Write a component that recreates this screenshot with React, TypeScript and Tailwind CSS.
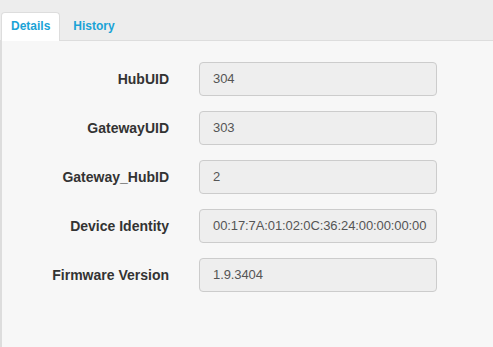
import React from "react";

const rows: [string, string][] = [
  ["HubUID", "304"],
  ["GatewayUID", "303"],
  ["Gateway_HubID", "2"],
  ["Device Identity", "00:17:7A:01:02:0C:36:24:00:00:00:00"],
  ["Firmware Version", "1.9.3404"],
];

export default function App() {
  return (
    <div
      className="w-[493px] h-[347px] flex flex-col bg-[#f7f7f7] overflow-hidden"
      style={{ fontFamily: '"Liberation Sans", Arial, sans-serif' }}
    >
      <div className="h-[41px] shrink-0 bg-[#ededed] border-b border-[#dddddd] flex items-end pl-[1px]">
        <div className="h-[29px] -mb-px bg-white border border-b-0 border-[#dddddd] rounded-t-[4px] px-[9px] pb-[2px] flex items-center text-[12px] font-bold text-[#1aa3d6]">
          Details
        </div>
        <div className="h-[29px] -mb-px px-[13px] pb-[2px] flex items-center text-[12px] font-bold text-[#1aa3d6]">
          History
        </div>
      </div>
      <div className="flex-1 flex">
        <div className="w-[2px] bg-[#dddddd]" />
        <div className="flex-1 pt-[21px] flex flex-col gap-[15px]">
          {rows.map(([label, value]) => (
            <div key={label} className="flex items-center">
              <div className="w-[167px] text-right text-[14px] font-bold text-[#333333]">
                {label}
              </div>
              <div className="ml-[30px] w-[238px] h-[34px] bg-[#eeeeee] border border-[#cccccc] rounded-[4px] flex items-center px-[13px] text-[13px] text-[#555555] whitespace-nowrap tracking-[-0.1px]">
                {value}
              </div>
            </div>
          ))}
        </div>
      </div>
    </div>
  );
}
